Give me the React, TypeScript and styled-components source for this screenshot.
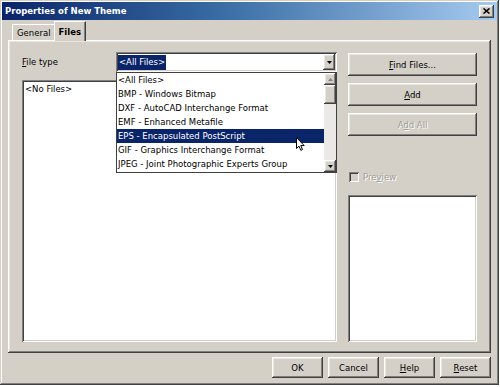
import React from "react";
import styled, { createGlobalStyle, css } from "styled-components";

const Global = createGlobalStyle`
  html, body { margin: 0; padding: 0; background: #ffffff; }
  body { font-family: "DejaVu Sans", "Liberation Sans", sans-serif; font-size: 8.5px; color: #000; }
  * { box-sizing: border-box; }
`;

const raised = css`
  box-shadow: inset -1px -1px #404040, inset 1px 1px #ffffff, inset -2px -2px #808080, inset 2px 2px #e8e6e0;
`;
const sunken = css`
  box-shadow: inset 1px 1px #808080, inset -1px -1px #ffffff, inset 2px 2px #404040, inset -2px -2px #d4d0c8;
`;

const Window = styled.div`
  position: relative;
  width: 499px;
  height: 385px;
  background: #d4d0c8;
  padding: 2px;
  display: flex;
  flex-direction: column;
  box-shadow: inset -1px -1px #404040, inset 1px 1px #d4d0c8, inset -2px -2px #808080, inset 2px 2px #ffffff;
`;

const TitleBar = styled.div`
  height: 18px;
  flex: none;
  display: flex;
  align-items: center;
  justify-content: space-between;
  padding: 0 3px 0 3px;
  background: linear-gradient(90deg, #0a246a 0%, #3a6ea5 45%, #a6caf0 100%);
  color: #fff;
  font-weight: bold;
  font-size: 8.5px;
`;

const CloseButton = styled.div`
  width: 15px;
  height: 13px;
  background: #d4d0c8;
  ${raised};
  display: flex;
  align-items: center;
  justify-content: center;
`;

const Body = styled.div`
  flex: 1;
  display: flex;
  flex-direction: column;
  padding: 0 6px 5px 6px;
`;

const TabStrip = styled.div`
  height: 20px;
  flex: none;
  display: flex;
  align-items: flex-end;
  padding-left: 4px;
  position: relative;
  z-index: 2;
`;

const Tab = styled.div<{ $active?: boolean }>`
  position: relative;
  height: ${(p) => (p.$active ? "20px" : "16px")};
  margin-bottom: ${(p) => (p.$active ? "-1px" : "0")};
  padding: 0 4px;
  display: flex;
  align-items: center;
  font-weight: ${(p) => (p.$active ? "bold" : "normal")};
  font-size: 8.5px;
  background: #d4d0c8;
  border-top: 1px solid #ffffff;
  border-left: 1px solid #ffffff;
  border-right: 1px solid #404040;
  box-shadow: inset -1px 0 #808080;
  ${(p) => (p.$active ? "margin-left: -2px;" : "")}
`;

const TabPanel = styled.div`
  flex: none;
  height: 313px;
  position: relative;
  display: grid;
  grid-template-columns: 315px 129px;
  column-gap: 11px;
  padding: 12px 14px 11px 14px;
  ${raised};
`;

const LeftCol = styled.div`
  display: flex;
  flex-direction: column;
  gap: 8px;
  min-height: 0;
`;

const FieldRow = styled.div`
  height: 20px;
  display: flex;
  align-items: center;
`;

const Label = styled.div`
  width: 94px;
  font-size: 8.5px;
`;

const Combo = styled.div`
  width: 221px;
  height: 20px;
  background: #fff;
  padding: 2px;
  display: flex;
  align-items: stretch;
  ${sunken};
`;

const ComboText = styled.div`
  flex: 1;
  display: flex;
  align-items: center;
`;

const Selected = styled.span`
  background: #0a246a;
  color: #fff;
  padding: 1px 1px;
  line-height: 13px;
`;

const ArrowButton = styled.div<{ $h?: number }>`
  width: 12px;
  height: ${(p) => p.$h ?? 16}px;
  background: #d4d0c8;
  flex: none;
  display: flex;
  align-items: center;
  justify-content: center;
  ${raised};
`;

const FilesList = styled.div`
  flex: 1;
  background: #fff;
  padding: 4px 3px;
  ${sunken};
`;

const DropList = styled.div`
  position: absolute;
  left: 108px;
  top: 32px;
  width: 221px;
  height: 101px;
  background: #fff;
  border: 1px solid #404040;
  display: flex;
  z-index: 3;
`;

const Items = styled.div`
  flex: 1;
  display: flex;
  flex-direction: column;
`;

const Item = styled.div<{ $hl?: boolean }>`
  height: 14px;
  line-height: 14px;
  padding-left: 1px;
  white-space: nowrap;
  overflow: hidden;
  background: ${(p) => (p.$hl ? "#0a246a" : "transparent")};
  color: ${(p) => (p.$hl ? "#fff" : "#000")};
`;

const ScrollBar = styled.div`
  width: 12px;
  flex: none;
  display: flex;
  flex-direction: column;
  background: #ebe9e5;
`;

const Thumb = styled.div`
  height: 19px;
  background: #d4d0c8;
  ${raised};
`;

const Track = styled.div`
  flex: 1;
`;

const RightCol = styled.div`
  display: flex;
  flex-direction: column;
  padding-top: 1px;
`;

const Button = styled.div<{ $disabled?: boolean; $h?: number }>`
  height: ${(p) => p.$h ?? 23}px;
  display: flex;
  align-items: center;
  justify-content: center;
  background: #d4d0c8;
  font-size: 8.5px;
  color: ${(p) => (p.$disabled ? "#a09e98" : "#000")};
  text-shadow: ${(p) => (p.$disabled ? "1px 1px #ffffff" : "none")};
  ${raised};
`;

const ButtonStack = styled.div`
  display: flex;
  flex-direction: column;
  gap: 7px;
`;

const CheckRow = styled.div`
  margin-top: 35px;
  height: 12px;
  display: flex;
  align-items: center;
  gap: 4px;
  padding-left: 1px;
  color: #a09e98;
  text-shadow: 1px 1px #ffffff;
`;

const CheckBox = styled.div`
  width: 10px;
  height: 10px;
  background: #d4d0c8;
  ${sunken};
`;

const PreviewBox = styled.div`
  margin-top: 12px;
  flex: 1;
  background: #fff;
  ${sunken};
`;

const ButtonRow = styled.div`
  margin-top: 4px;
  display: flex;
  justify-content: flex-end;
  gap: 5px;
`;

const DialogButton = styled(Button)`
  width: 51px;
  height: 21px;
`;

const U = styled.span`
  text-decoration: underline;
`;

const Cursor = styled.svg`
  position: absolute;
  left: 288px;
  top: 97px;
  z-index: 4;
`;

const Down = ({ color = "#000" }: { color?: string }) => (
  <svg width="5" height="3" viewBox="0 0 5 3">
    <path d="M0 0h5L2.5 3z" fill={color} />
  </svg>
);
const Up = ({ color = "#000" }: { color?: string }) => (
  <svg width="5" height="3" viewBox="0 0 5 3">
    <path d="M0 3h5L2.5 0z" fill={color} />
  </svg>
);

const items = [
  "<All Files>",
  "BMP - Windows Bitmap",
  "DXF - AutoCAD Interchange Format",
  "EMF - Enhanced Metafile",
  "EPS - Encapsulated PostScript",
  "GIF - Graphics Interchange Format",
  "JPEG - Joint Photographic Experts Group",
];

export default function App() {
  return (
    <>
      <Global />
      <Window>
        <TitleBar>
          <span>Properties of New Theme</span>
          <CloseButton>
            <svg width="7" height="6" viewBox="0 0 7 6">
              <path d="M0.5 0.5L6.5 5.5M6.5 0.5L0.5 5.5" stroke="#000" strokeWidth="1.6" />
            </svg>
          </CloseButton>
        </TitleBar>
        <Body>
          <TabStrip>
            <Tab>General</Tab>
            <Tab $active>Files</Tab>
          </TabStrip>
          <TabPanel>
            <LeftCol>
              <FieldRow>
                <Label>
                  <U>F</U>ile type
                </Label>
                <Combo>
                  <ComboText>
                    <Selected>&lt;All Files&gt;</Selected>
                  </ComboText>
                  <ArrowButton>
                    <Down />
                  </ArrowButton>
                </Combo>
              </FieldRow>
              <FilesList>&lt;No Files&gt;</FilesList>
            </LeftCol>
            <RightCol>
              <ButtonStack>
                <Button>
                  <span>
                    <U>F</U>ind Files...
                  </span>
                </Button>
                <Button>
                  <span>
                    <U>A</U>dd
                  </span>
                </Button>
                <Button $disabled>
                  <span>
                    A<U>d</U>d All
                  </span>
                </Button>
              </ButtonStack>
              <CheckRow>
                <CheckBox />
                <span>
                  Pre<U>v</U>iew
                </span>
              </CheckRow>
              <PreviewBox />
            </RightCol>
            <DropList>
              <Items>
                {items.map((t) => (
                  <Item key={t} $hl={t.startsWith("EPS")}>
                    {t}
                  </Item>
                ))}
              </Items>
              <ScrollBar>
                <ArrowButton $h={12}>
                  <Up color="#808080" />
                </ArrowButton>
                <Thumb />
                <Track />
                <ArrowButton $h={12}>
                  <Down />
                </ArrowButton>
              </ScrollBar>
            </DropList>
            <Cursor width="10" height="15" viewBox="0 0 10 15">
              <path d="M0.5 0.5V11.5L3 9.2L4.8 13.3L6.5 12.6L4.8 8.6H8.2Z" fill="#fff" stroke="#000" strokeWidth="1" strokeLinejoin="miter" />
            </Cursor>
          </TabPanel>
          <ButtonRow>
            <DialogButton>OK</DialogButton>
            <DialogButton>Cancel</DialogButton>
            <DialogButton>
              <span>
                <U>H</U>elp
              </span>
            </DialogButton>
            <DialogButton>
              <span>
                <U>R</U>eset
              </span>
            </DialogButton>
          </ButtonRow>
        </Body>
      </Window>
    </>
  );
}
